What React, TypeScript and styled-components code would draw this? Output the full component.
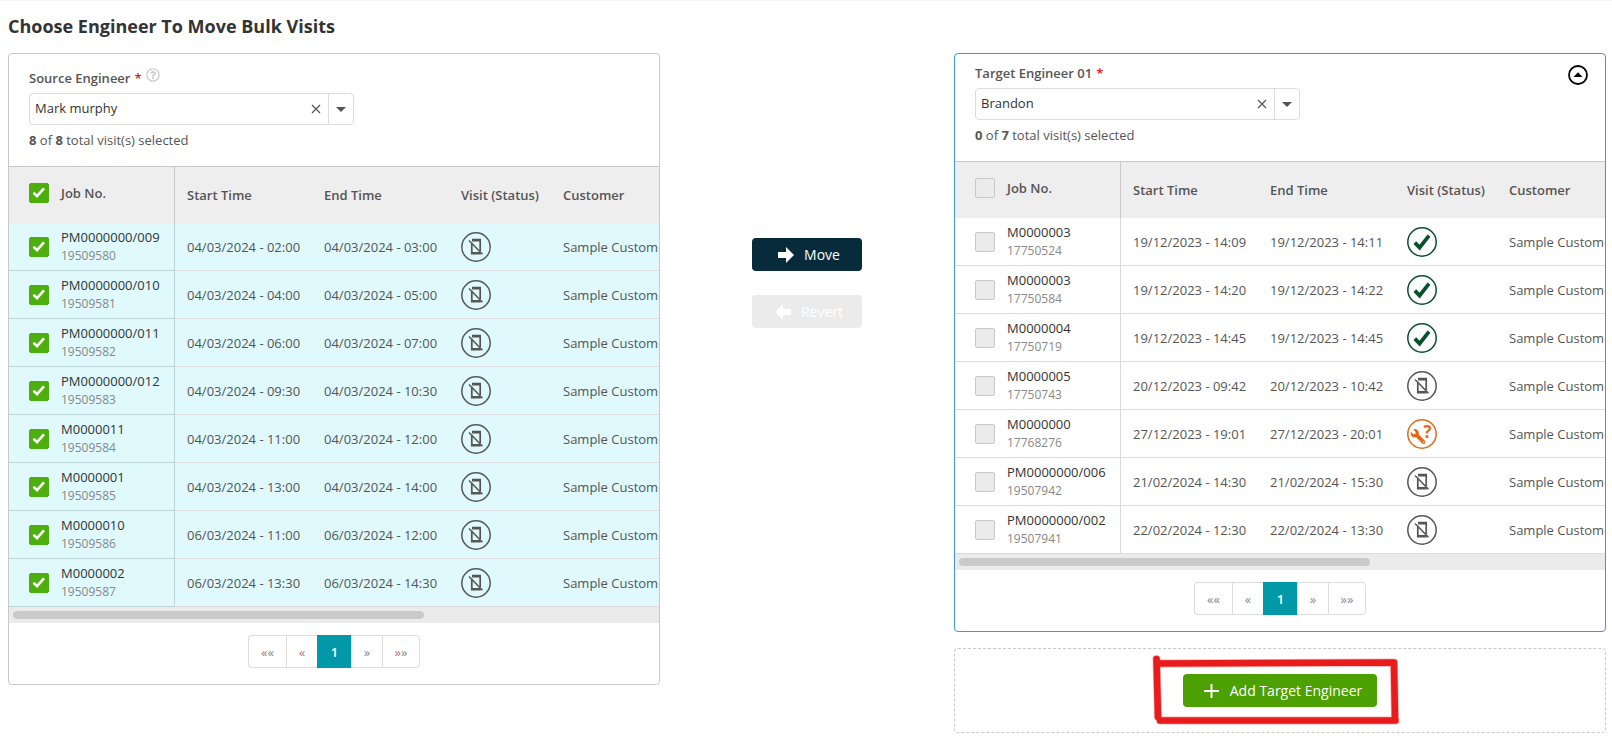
import React from "react";
import styled, { createGlobalStyle, css } from "styled-components";
import { FaRegQuestionCircle, FaWrench } from "react-icons/fa";

type Status = "offline" | "done" | "query";

interface Visit {
  job: string;
  id: string;
  start: string;
  end: string;
  status: Status;
}

const visit = (job: string, id: string, start: string, end: string, status: Status = "offline"): Visit => ({
  job,
  id,
  start,
  end,
  status,
});

const sourceVisits: Visit[] = [
  visit("PM0000000/009", "19509580", "04/03/2024 - 02:00", "04/03/2024 - 03:00"),
  visit("PM0000000/010", "19509581", "04/03/2024 - 04:00", "04/03/2024 - 05:00"),
  visit("PM0000000/011", "19509582", "04/03/2024 - 06:00", "04/03/2024 - 07:00"),
  visit("PM0000000/012", "19509583", "04/03/2024 - 09:30", "04/03/2024 - 10:30"),
  visit("M0000011", "19509584", "04/03/2024 - 11:00", "04/03/2024 - 12:00"),
  visit("M0000001", "19509585", "04/03/2024 - 13:00", "04/03/2024 - 14:00"),
  visit("M0000010", "19509586", "06/03/2024 - 11:00", "06/03/2024 - 12:00"),
  visit("M0000002", "19509587", "06/03/2024 - 13:30", "06/03/2024 - 14:30"),
];

const targetVisits: Visit[] = [
  visit("M0000003", "17750524", "19/12/2023 - 14:09", "19/12/2023 - 14:11", "done"),
  visit("M0000003", "17750584", "19/12/2023 - 14:20", "19/12/2023 - 14:22", "done"),
  visit("M0000004", "17750719", "19/12/2023 - 14:45", "19/12/2023 - 14:45", "done"),
  visit("M0000005", "17750743", "20/12/2023 - 09:42", "20/12/2023 - 10:42"),
  visit("M0000000", "17768276", "27/12/2023 - 19:01", "27/12/2023 - 20:01", "query"),
  visit("PM0000000/006", "19507942", "21/02/2024 - 14:30", "21/02/2024 - 15:30"),
  visit("PM0000000/002", "19507941", "22/02/2024 - 12:30", "22/02/2024 - 13:30"),
];

const GlobalStyle = createGlobalStyle`
  *, *::before, *::after { box-sizing: border-box; }
  body {
    margin: 0;
    background: #fff;
    color: #555;
    font-family: "Open Sans", "Noto Sans", sans-serif;
    font-size: 13px;
    line-height: 20px;
  }
  button, select, input { font: inherit; color: inherit; margin: 0; }
  button { cursor: pointer; }
`;

const Page = styled.main`
  border-top: 1px solid #f5f5f5;
  padding: 13px 6px 15px 8px;
`;

const Title = styled.h1`
  margin: 0 0 15px;
  font-size: 18px;
  line-height: 24px;
  font-weight: 700;
  color: #333;
`;

const Columns = styled.div`
  display: grid;
  grid-template-columns: minmax(0, 652fr) minmax(0, 294fr) minmax(0, 652fr);
  align-items: start;
`;

const TargetColumn = styled.div`
  display: flex;
  flex-direction: column;
  gap: 16px;
`;

const Card = styled.section<{ $active?: boolean }>`
  border: 1px solid ${(p) => (p.$active ? "#3c97d3" : "#c8c8c8")};
  border-radius: 4px;
  overflow: hidden;
`;

const CardHeader = styled.header`
  display: flex;
  justify-content: space-between;
  align-items: flex-start;
  padding: 9px 17px 16px 20px;
  border-bottom: 1px solid #c8c8c8;
`;

const Picker = styled.div`
  display: flex;
  flex-direction: column;
  gap: 5px;
  width: 325px;
`;

const LabelRow = styled.div<{ $tall?: boolean }>`
  display: flex;
  align-items: flex-end;
  gap: 4px;
  height: ${(p) => (p.$tall ? 25 : 20)}px;
  font-weight: 600;
`;

const Required = styled.span`
  color: #e81c1c;
`;

const HelpButton = styled.button`
  display: flex;
  align-self: flex-start;
  margin-top: 5px;
  padding: 0;
  border: 0;
  background: none;
  color: #ccc;
`;

const Combo = styled.div`
  display: flex;
  height: 32px;
  border: 1px solid #dcdcdc;
  border-radius: 4px;
`;

const ComboSelect = styled.select`
  flex: 1;
  min-width: 0;
  padding: 0 5px 2px;
  border: 0;
  background: none;
  appearance: none;
  color: #333;
`;

const ComboButton = styled.button<{ $divided?: boolean }>`
  display: grid;
  place-items: center;
  width: 25px;
  padding: 0;
  border: 0;
  background: none;
  color: #555;
  ${(p) =>
    p.$divided &&
    css`
      border-left: 1px solid #dcdcdc;
    `}
`;

const Summary = styled.p`
  margin: 0;
  b {
    font-weight: 700;
  }
`;

const CollapseButton = styled.button`
  display: flex;
  margin-top: 2px;
  padding: 0;
  border: 0;
  background: none;
`;

const TableScroller = styled.div`
  overflow-x: auto;
  scrollbar-width: none;
`;

const Table = styled.table`
  width: 1015px;
  table-layout: fixed;
  border-collapse: separate;
  border-spacing: 0;
`;

const Col = styled.col<{ $width?: number }>`
  ${(p) => p.$width && `width: ${p.$width}px;`}
`;

const frozen = css`
  position: sticky;
  left: 0;
  padding-left: 20px;
  border-right: 1px solid rgba(0, 0, 0, 0.15);
`;

const HeadCell = styled.th<{ $frozen?: boolean }>`
  height: 56px;
  padding: 0 12px;
  background: #eee;
  font-weight: 600;
  text-align: left;
  white-space: nowrap;
  ${(p) =>
    p.$frozen &&
    css`
      ${frozen}
      padding-bottom: 4px;
    `}
`;

const Row = styled.tr<{ $selected?: boolean }>`
  --row: ${(p) => (p.$selected ? "#dff9fd" : "#fff")};
  --line: ${(p) => (p.$selected ? "#e0dbe0" : "#dcdcdc")};
`;

const Cell = styled.td<{ $frozen?: boolean }>`
  height: 48px;
  padding: 0 12px;
  border-bottom: 1px solid var(--line);
  background: var(--row);
  white-space: nowrap;
  ${(p) =>
    p.$frozen &&
    css`
      ${frozen}
      border-bottom-color: rgba(0, 0, 0, 0.15);
    `}
`;

const JobLine = styled.label`
  display: flex;
  align-items: center;
  gap: 12px;
`;

const JobText = styled.span`
  display: flex;
  flex-direction: column;
  gap: 1px;
  line-height: 18px;
  color: #333;
`;

const JobId = styled.small`
  font-size: 12px;
  color: #888;
`;

const Tick = styled.span`
  display: grid;
  place-items: center;
  flex: none;
  width: 20px;
  height: 20px;
  color: #fff;
  > * {
    grid-area: 1 / 1;
  }
  svg {
    z-index: 1;
    visibility: hidden;
    pointer-events: none;
  }
  input:checked + svg {
    visibility: visible;
  }
`;

const TickInput = styled.input`
  width: 20px;
  height: 20px;
  appearance: none;
  border: 1px solid #c8c8c8;
  border-radius: 2px;
  background: #ebebeb;
  &:checked {
    border-color: #4caf0e;
    background: #4caf0e;
  }
`;

const StatusIcon = styled.svg`
  display: block;
`;

const ScrollTrack = styled.div`
  padding: 4px;
  background: #ebebeb;
`;

const ScrollThumb = styled.div`
  width: 64%;
  height: 8px;
  border-radius: 4px;
  background: #cacaca;
`;

const Pager = styled.nav`
  display: flex;
  justify-content: center;
  padding: 12px 0 16px;
`;

const PageButton = styled.button<{ $width: number; $current?: boolean }>`
  width: ${(p) => p.$width}px;
  height: 33px;
  padding: 0;
  border: 1px solid #dcdcdc;
  border-right-width: 0;
  background: #fff;
  color: #888;
  &:first-child {
    border-radius: 4px 0 0 4px;
  }
  &:last-child {
    border-right-width: 1px;
    border-radius: 0 4px 4px 0;
  }
  ${(p) =>
    p.$current &&
    css`
      border-color: #0199a8;
      background: #0199a8;
      color: #fff;
      font-weight: 600;
    `}
`;

const Transfer = styled.div`
  display: flex;
  flex-direction: column;
  align-items: center;
  gap: 24px;
  padding-top: 185px;
`;

const ActionButton = styled.button<{ $tone: "navy" | "green" }>`
  display: flex;
  align-items: center;
  justify-content: center;
  gap: 8px;
  min-width: 110px;
  height: 33px;
  padding: 0 15px 0 17px;
  border: 0;
  border-radius: 4px;
  background: ${(p) => (p.$tone === "navy" ? "#072b3a" : "#4ca002")};
  color: #fff;
  font-size: 14px;
  white-space: nowrap;
  &:disabled {
    background: #ebebeb;
    cursor: default;
  }
`;

const AddBox = styled.div`
  display: flex;
  justify-content: center;
  padding: 25px 0;
  border: 1px dashed #c8c8c8;
  border-radius: 4px;
`;

const Highlighted = styled.div`
  position: relative;
`;

const Highlight = styled.svg`
  position: absolute;
  left: -31px;
  top: -22px;
  pointer-events: none;
`;

function TickBox({ checked, label }: { checked: boolean; label: string }) {
  return (
    <Tick>
      <TickInput type="checkbox" defaultChecked={checked} aria-label={label} />
      <svg width="14" height="14" viewBox="0 0 14 14" fill="none" stroke="currentColor" strokeWidth="2.6">
        <path d="M1.5 6.8 5 10.1 12 2.3" />
      </svg>
    </Tick>
  );
}

function VisitStatus({ status }: { status: Status }) {
  if (status === "done") {
    return (
      <StatusIcon width="30" height="30" viewBox="0 0 30 30" color="#07502a" role="img" aria-label="Completed">
        <g fill="none" stroke="currentColor">
          <circle cx="15" cy="15" r="14.2" strokeWidth="1.5" />
          <path d="M7.8 15.6 12.6 20.6 22 8.6" strokeWidth="3.8" />
        </g>
      </StatusIcon>
    );
  }
  if (status === "query") {
    return (
      <StatusIcon width="30" height="30" viewBox="0 0 30 30" color="#e36a17" role="img" aria-label="Needs attention">
        <circle cx="15" cy="15" r="14.2" fill="none" stroke="currentColor" strokeWidth="1.5" />
        <g transform="translate(18.5 0) scale(-1 1)">
          <FaWrench x="0" y="10" size={15} />
        </g>
        <text x="16.5" y="19" fontSize="17" fontWeight="700" fill="currentColor">
          ?
        </text>
      </StatusIcon>
    );
  }
  return (
    <StatusIcon width="30" height="30" viewBox="0 0 30 30" color="#555" role="img" aria-label="Not on device">
      <g fill="none" stroke="currentColor">
        <circle cx="15" cy="15" r="14.2" strokeWidth="1.5" />
        <path d="M10.8 11V22M19.2 8v11" strokeWidth="1.7" />
        <path d="M11 8.1H20M10 21.3h9.8" strokeWidth="2.6" />
        <path d="M8 8.4 21.5 22.2" strokeWidth="1.5" />
      </g>
    </StatusIcon>
  );
}

interface EngineerCardProps {
  id: string;
  label: string;
  engineer: string;
  visits: Visit[];
  selected?: boolean;
  help?: boolean;
  collapsible?: boolean;
}

function EngineerCard({ id, label, engineer, visits, selected = false, help, collapsible }: EngineerCardProps) {
  return (
    <Card $active={collapsible}>
      <CardHeader>
        <Picker>
          <LabelRow $tall={help}>
            <label htmlFor={id}>{label}</label>
            <Required>*</Required>
            {help && (
              <HelpButton type="button" aria-label="Help">
                <FaRegQuestionCircle size={14} />
              </HelpButton>
            )}
          </LabelRow>
          <Combo>
            <ComboSelect id={id} defaultValue={engineer}>
              <option>{engineer}</option>
            </ComboSelect>
            <ComboButton type="button" aria-label="Clear">
              <svg width="10" height="10" viewBox="0 0 10 10" stroke="currentColor" strokeWidth="1.2">
                <path d="M1 1l8 8M9 1 1 9" />
              </svg>
            </ComboButton>
            <ComboButton type="button" $divided aria-label="Open list">
              <svg width="10" height="5" viewBox="0 0 10 5" fill="currentColor">
                <path d="M0 0h10L5 5z" />
              </svg>
            </ComboButton>
          </Combo>
          <Summary>
            <b>{selected ? visits.length : 0}</b> of <b>{visits.length}</b> total visit(s) selected
          </Summary>
        </Picker>
        {collapsible && (
          <CollapseButton type="button" aria-label="Collapse">
            <svg width="20" height="20" viewBox="0 0 20 20">
              <circle cx="10" cy="10" r="9" fill="none" stroke="#000" strokeWidth="1.8" />
              <path d="M5.5 12h9L10 7.3z" fill="#000" />
            </svg>
          </CollapseButton>
        )}
      </CardHeader>
      <TableScroller>
        <Table>
          <colgroup>
            <Col $width={166} />
            <Col $width={137} />
            <Col $width={137} />
            <Col $width={102} />
            <Col />
          </colgroup>
          <thead>
            <tr>
              <HeadCell $frozen scope="col">
                <JobLine>
                  <TickBox checked={selected} label="Select all visits" />
                  Job No.
                </JobLine>
              </HeadCell>
              <HeadCell scope="col">Start Time</HeadCell>
              <HeadCell scope="col">End Time</HeadCell>
              <HeadCell scope="col">Visit (Status)</HeadCell>
              <HeadCell scope="col">Customer</HeadCell>
            </tr>
          </thead>
          <tbody>
            {visits.map((v) => (
              <Row key={v.id} $selected={selected}>
                <Cell $frozen>
                  <JobLine>
                    <TickBox checked={selected} label={`Select ${v.job}`} />
                    <JobText>
                      {v.job}
                      <JobId>{v.id}</JobId>
                    </JobText>
                  </JobLine>
                </Cell>
                <Cell>{v.start}</Cell>
                <Cell>{v.end}</Cell>
                <Cell>
                  <VisitStatus status={v.status} />
                </Cell>
                <Cell>Sample Customer</Cell>
              </Row>
            ))}
          </tbody>
        </Table>
      </TableScroller>
      <ScrollTrack>
        <ScrollThumb />
      </ScrollTrack>
      <Pager aria-label={`${label} pages`}>
        <PageButton type="button" $width={38}>
          ««
        </PageButton>
        <PageButton type="button" $width={31}>
          «
        </PageButton>
        <PageButton type="button" $width={34} $current aria-current="page">
          1
        </PageButton>
        <PageButton type="button" $width={31}>
          »
        </PageButton>
        <PageButton type="button" $width={38}>
          »»
        </PageButton>
      </Pager>
    </Card>
  );
}

export default function App() {
  return (
    <>
      <GlobalStyle />
      <Page>
        <Title>Choose Engineer To Move Bulk Visits</Title>
        <Columns>
          <EngineerCard
            id="source-engineer"
            label="Source Engineer"
            engineer="Mark murphy"
            visits={sourceVisits}
            selected
            help
          />
          <Transfer>
            <ActionButton type="button" $tone="navy">
              <svg width="20" height="18" viewBox="0 0 20 18" fill="currentColor">
                <path d="M2 6h8V1l8 8-8 8v-5H2z" />
              </svg>
              Move
            </ActionButton>
            <ActionButton type="button" $tone="navy" disabled>
              <svg width="20" height="18" viewBox="0 0 20 18" fill="currentColor">
                <path d="M18 6h-8V1L2 9l8 8v-5h8z" />
              </svg>
              Revert
            </ActionButton>
          </Transfer>
          <TargetColumn>
            <EngineerCard
              id="target-engineer-01"
              label="Target Engineer 01"
              engineer="Brandon"
              visits={targetVisits}
              collapsible
            />
            <AddBox>
              <Highlighted>
                <ActionButton type="button" $tone="green">
                  <svg width="22" height="16" viewBox="0 0 22 16" stroke="currentColor" strokeWidth="2">
                    <path d="M4 8h15M11.5 1v14" />
                  </svg>
                  Add Target Engineer
                </ActionButton>
                <Highlight width="252" height="76" viewBox="0 0 252 76" fill="none" strokeLinecap="round">
                  <path
                    d="M4.5 7 6 65M6 11.5 242 10.5M242 11 243 67M8 68.5H243.5"
                    stroke="#f7b4b4"
                    strokeWidth="8"
                  />
                  <path
                    d="M4.5 7 6 65M6 11.5 242 10.5M242 11 243 67M8 68.5H243.5"
                    stroke="#e81c1c"
                    strokeWidth="6.6"
                  />
                </Highlight>
              </Highlighted>
            </AddBox>
          </TargetColumn>
        </Columns>
      </Page>
    </>
  );
}
